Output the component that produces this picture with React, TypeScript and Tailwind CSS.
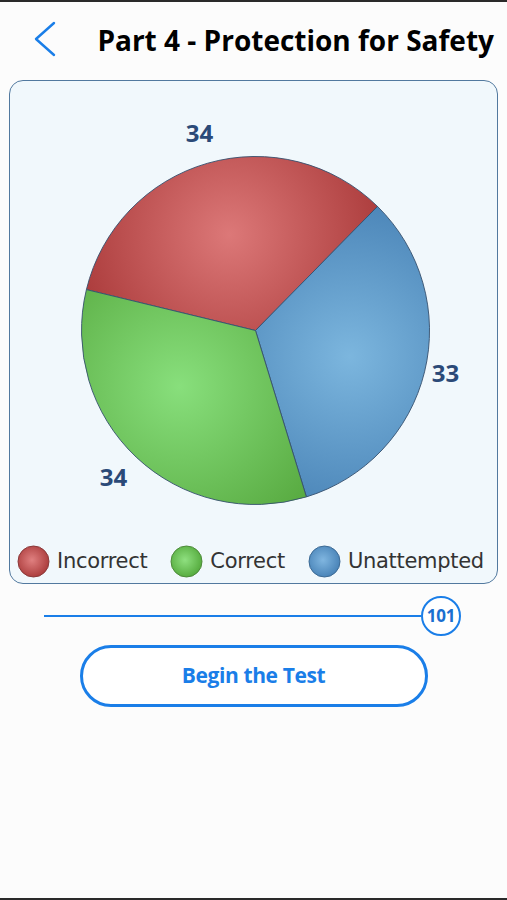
import React from 'react';

const cx = 245.5;
const cy = 249.5;

const slices = [
  { id: 'red', d: `M ${cx} ${cy} L 76.4 208.6 A 174 174 0 0 1 367.5 125.4 Z`, hx: 219.5, hy: 153.5, light: '#dc7878', dark: '#a63535' },
  { id: 'blue', d: `M ${cx} ${cy} L 367.5 125.4 A 174 174 0 0 1 296.4 415.9 Z`, hx: 339.5, hy: 275.5, light: '#7cb6de', dark: '#4680b4' },
  { id: 'green', d: `M ${cx} ${cy} L 296.4 415.9 A 174 174 0 0 1 76.4 208.6 Z`, hx: 169.5, hy: 305.5, light: '#88df7c', dark: '#56a83e' },
];

const legend = [
  { label: 'Incorrect', light: '#e08080', dark: '#a83838', ring: '#8a3a3a' },
  { label: 'Correct', light: '#8fe080', dark: '#52a83a', ring: '#4d8a3a' },
  { label: 'Unattempted', light: '#80b6e0', dark: '#4580b5', ring: '#3d6a94' },
];

function Dot({ light, dark, ring, id }: { light: string; dark: string; ring: string; id: string }) {
  return (
    <svg width="33" height="33" viewBox="0 0 33 33">
      <defs>
        <radialGradient id={id} cx="45%" cy="45%" r="60%">
          <stop offset="0%" stopColor={light} />
          <stop offset="100%" stopColor={dark} />
        </radialGradient>
      </defs>
      <circle cx="16.5" cy="16.5" r="15.5" fill={`url(#${id})`} stroke={ring} strokeWidth="1" />
    </svg>
  );
}

export default function App() {
  return (
    <div className="w-[507px] h-[900px] bg-[#fcfcfc] flex flex-col border-t-2 border-b-2 border-[#2a2a2a] font-['Open_Sans',sans-serif]">
      {/* header */}
      <div className="flex items-center h-[76px] pl-[33px] pr-[13px]">
        <svg width="24" height="38" viewBox="0 0 24 38" className="shrink-0">
          <path d="M21 2 L3 18 L21 34" fill="none" stroke="#1a7ee8" strokeWidth="2.4" strokeLinecap="round" strokeLinejoin="round" />
        </svg>
        <h1 className="ml-auto text-[28px] font-bold text-black leading-none">Part 4 - Protection for Safety</h1>
      </div>

      {/* chart card */}
      <div className="mx-[9px] mt-[2px] h-[504px] rounded-[14px] border-[1.5px] border-[#52799f] bg-[#f1f8fc] flex flex-col">
        <svg width="486" height="440" viewBox="0 0 486 440" className="shrink-0">
          <defs>
            {slices.map((s) => (
              <radialGradient key={s.id} id={`g-${s.id}`} gradientUnits="userSpaceOnUse" cx={s.hx} cy={s.hy} r="175">
                <stop offset="0%" stopColor={s.light} />
                <stop offset="100%" stopColor={s.dark} />
              </radialGradient>
            ))}
          </defs>
          {slices.map((s) => (
            <path key={s.id} d={s.d} fill={`url(#g-${s.id})`} stroke="#35506e" strokeWidth="0.9" strokeLinejoin="round" />
          ))}
          <g fill="#2b4a78" fontSize="24" fontWeight="700" fontFamily="'Open Sans', sans-serif" textAnchor="middle" dominantBaseline="central">
            <text x="189.5" y="51.5">34</text>
            <text x="435.5" y="291.5">33</text>
            <text x="103.5" y="395.5">34</text>
          </g>
        </svg>
        <div className="mt-auto mb-[5px] flex items-center px-[7px] font-['DejaVu_Sans',sans-serif] text-[21px] text-[#333]">
          {legend.map((l, i) => (
            <div key={l.label} className={`flex items-center gap-[7px] ${i === 0 ? '' : 'ml-[23px]'}`}>
              <Dot id={`d-${i}`} light={l.light} dark={l.dark} ring={l.ring} />
              <span className="tracking-[-0.3px]">{l.label}</span>
            </div>
          ))}
        </div>
      </div>

      {/* slider */}
      <div className="mt-[12px] flex items-center pl-[44px]">
        <div className="w-[377px] h-[2px] bg-[#1a7ee8]" />
        <div className="w-[40px] h-[40px] rounded-full border-[2.5px] border-[#1a7ee8] bg-white flex items-center justify-center text-[17px] font-bold text-[#1a6fd0] tracking-[-0.3px]">
          101
        </div>
      </div>

      {/* button */}
      <div className="mt-[9px] flex justify-center">
        <button className="w-[348px] h-[62px] rounded-full border-[3px] border-[#1a7ee8] bg-white text-[21px] font-bold text-[#1a7ee8] tracking-[-0.4px]">
          Begin the Test
        </button>
      </div>
    </div>
  );
}
